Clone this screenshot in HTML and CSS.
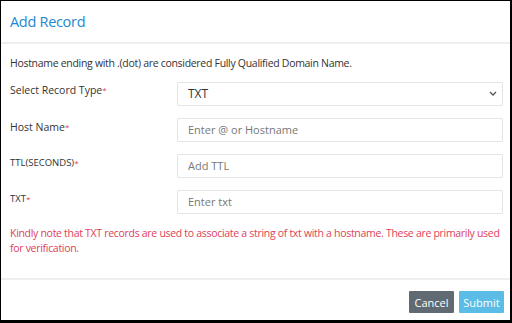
FILE: index.html
```html
<!DOCTYPE html>
<html lang="en">
<head>
    <meta charset="UTF-8">
    <title>Add Record</title>
    <link rel="stylesheet" href="styles.css">
</head>
<body>
    <div class="modal">
        <header class="modal-header">
            <h1 class="modal-title">Add Record</h1>
        </header>

        <main class="modal-body">
            <p class="hint">Hostname ending with .(dot) are considered Fully Qualified Domain Name.</p>

            <div class="form-row">
                <label class="form-label">Select Record Type<span class="req">*</span></label>
                <div class="select-wrap">
                    <select class="form-control">
                        <option>TXT</option>
                    </select>
                    <svg class="caret" width="8" height="5" viewBox="0 0 8 5"><path d="M1 1l3 3 3-3" fill="none" stroke="#555" stroke-width="1.3"/></svg>
                </div>
            </div>

            <div class="form-row">
                <label class="form-label">Host Name<span class="req">*</span></label>
                <input class="form-control" type="text" placeholder="Enter @ or Hostname">
            </div>

            <div class="form-row">
                <label class="form-label label-small">TTL(SECONDS)<span class="req">*</span></label>
                <input class="form-control" type="text" placeholder="Add TTL">
            </div>

            <div class="form-row">
                <label class="form-label label-small">TXT<span class="req">*</span></label>
                <input class="form-control" type="text" placeholder="Enter txt">
            </div>

            <p class="note">Kindly note that TXT records are used to associate a string of txt with a hostname. These are primarily used for verification.</p>
        </main>

        <footer class="modal-footer">
            <button class="btn btn-cancel">Cancel</button>
            <button class="btn btn-submit">Submit</button>
        </footer>
    </div>
</body>
</html>
```

FILE: styles.css
```css
/* --- Page --- */
body {
    margin: 0;
    font-family: 'Open Sans', 'Noto Sans', sans-serif;
    color: #333;
    background-color: #ffffff;
}

/* --- Modal box --- */
.modal {
    width: 512px;
    height: 323px;
    box-sizing: border-box;
    border-style: solid;
    border-color: #000;
    border-width: 1px 2px 3px 1px;
    display: flex;
    flex-direction: column;
}

.modal-header {
    height: 41px;
    padding: 0 9px;
    display: flex;
    align-items: center;
    border-bottom: 2px solid #eeeeee;
}

.modal-title {
    margin: 0;
    font-size: 14.5px;
    font-weight: 400;
    letter-spacing: -0.3px;
    color: #1e88d0;
}

.modal-body {
    flex: 1;
    padding: 12px 7px 0 9px;
}

.hint {
    margin: 0 0 11px;
    font-size: 10.5px;
    line-height: 14px;
    letter-spacing: -0.3px;
}

/* --- Form rows --- */
.form-row {
    display: grid;
    grid-template-columns: 167px 1fr;
    margin-bottom: 12px;
}

.form-label {
    font-size: 10.5px;
    line-height: 14px;
    padding-top: 2px;
}

.label-small {
    font-size: 9.5px;
}

.req {
    color: #e0405a;
    font-size: 8px;
    vertical-align: top;
}

.select-wrap {
    position: relative;
}

.form-control {
    width: 100%;
    height: 24px;
    box-sizing: border-box;
    margin: 0;
    padding: 0 10px;
    border: 1px solid #e3e3e8;
    border-radius: 1px;
    background-color: #fff;
    font-family: inherit;
    font-size: 11px;
    color: #333;
    outline: none;
}

.form-control::placeholder {
    color: #777;
}

select.form-control {
    appearance: none;
    -webkit-appearance: none;
    font-size: 12px;
}

.caret {
    position: absolute;
    right: 6px;
    top: 10px;
}

.note {
    margin: 0;
    font-size: 10.5px;
    line-height: 15px;
    letter-spacing: -0.3px;
    color: #e0405a;
}

/* --- Footer --- */
.modal-footer {
    height: 42px;
    box-sizing: border-box;
    border-top: 2px solid #eeeeee;
    display: flex;
    justify-content: flex-end;
    align-items: flex-start;
    gap: 5px;
    padding: 11px 6px 0 0;
}

.btn {
    width: 45px;
    height: 22px;
    padding: 0;
    border: none;
    border-radius: 1px;
    font-family: inherit;
    font-size: 11px;
    color: #fff;
}

.btn-cancel {
    background-color: #5f6a72;
}

.btn-submit {
    background-color: #5bbde6;
}
```
